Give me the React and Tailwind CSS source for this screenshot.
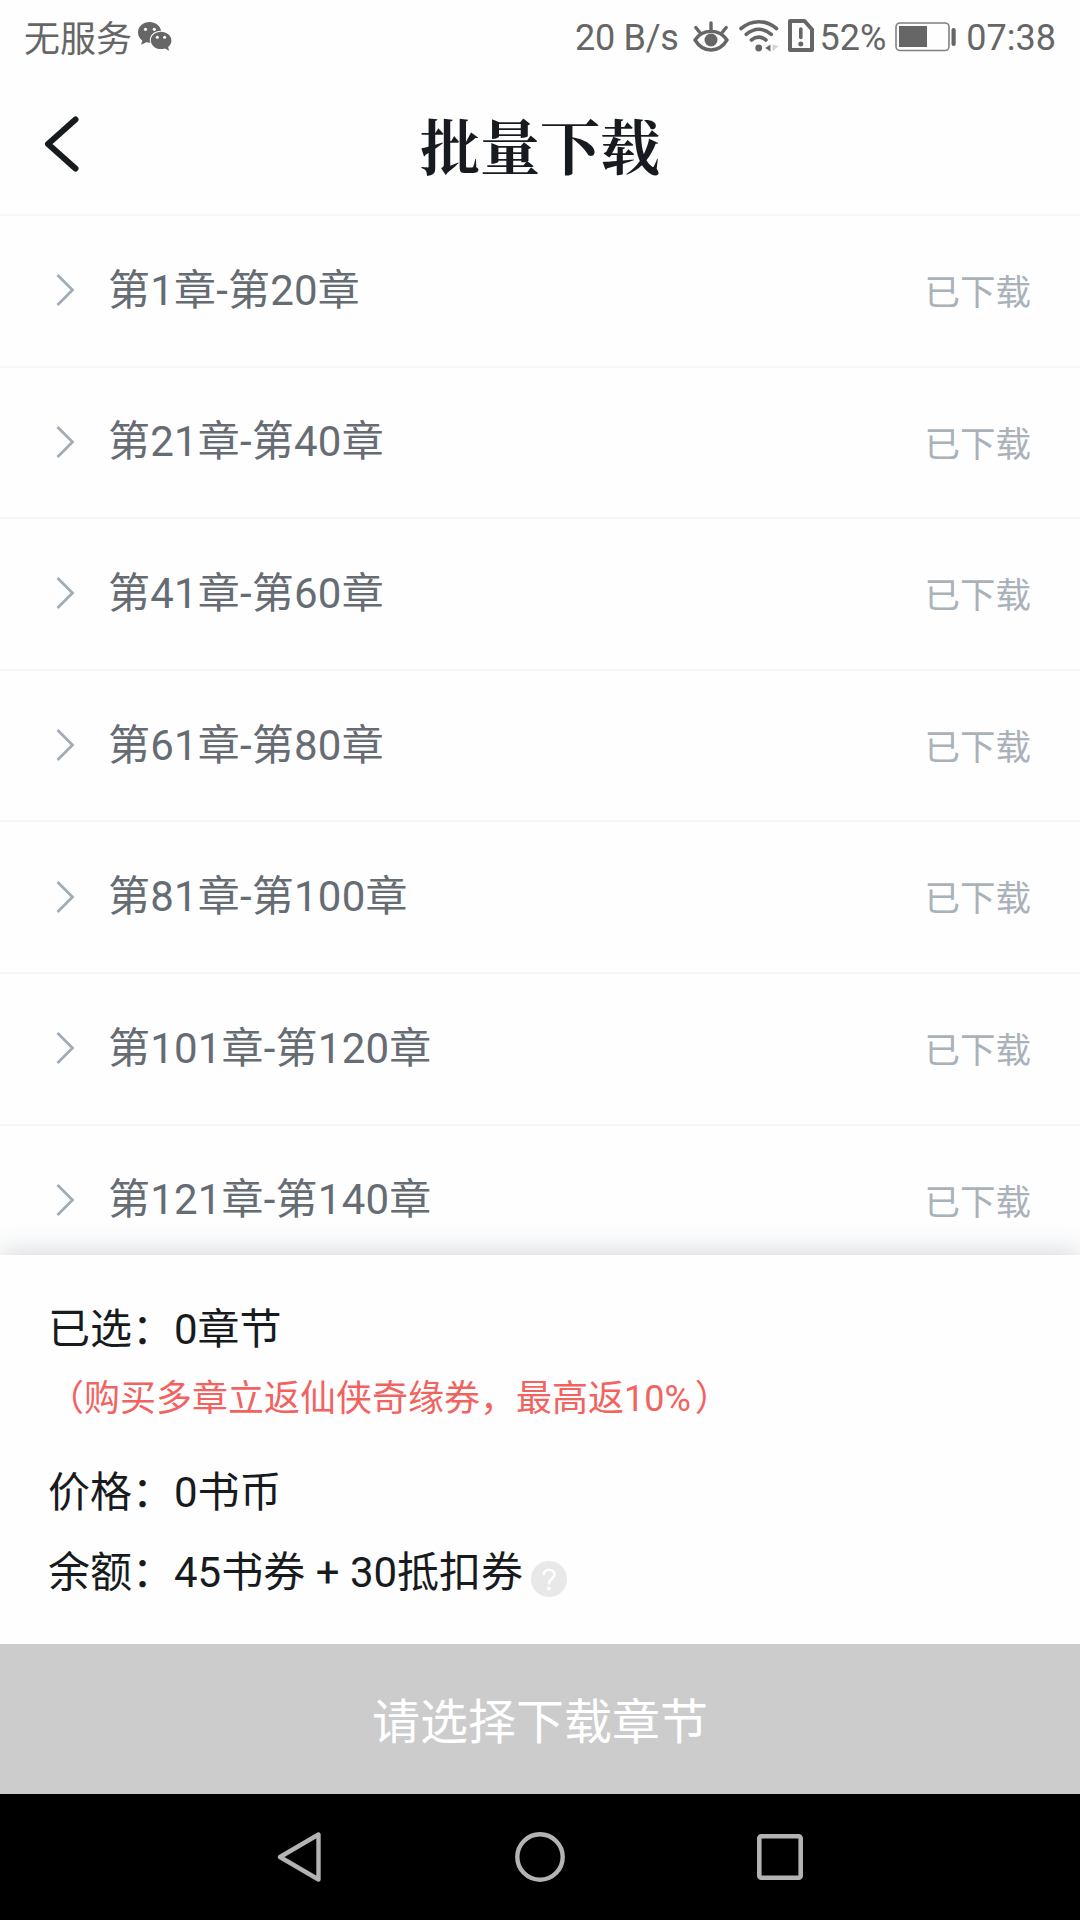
import React from 'react'

const chapters = [
  { id: 1, label: '第1章-第20章' },
  { id: 2, label: '第21章-第40章' },
  { id: 3, label: '第41章-第60章' },
  { id: 4, label: '第61章-第80章' },
  { id: 5, label: '第81章-第100章' },
  { id: 6, label: '第101章-第120章' },
  { id: 7, label: '第121章-第140章' },
]

function WechatIcon() {
  return (
    <svg className="w-[34px] h-[30px]" viewBox="0 0 34 30" fill="#666666">
      <path d="M11.6 0C5.2 0 0 4.6 0 10.4c0 3.3 1.7 6.200 4.300 8.100L3.200 22.800l5-2.500c1.300.35 2.600.5 4 .45A9.600 9.600 0 0 1 11.800 18c0-5.200 4.900-9.300 11-9.300h.3C22.200 3.700 17.400 0 11.600 0z" />
      <path d="M22.900 9.800c-5.600 0-10.100 3.800-10.100 8.600s4.500 8.600 10.100 8.600c1.400 0 2.700-.2 3.900-.6l4.300 2.400-1-3.900c2-1.600 3.300-3.900 3.300-6.500 0-4.800-4.800-8.600-10.500-8.600z" />
      <circle cx="7.500" cy="7.300" r="1.600" fill="#fff" />
      <circle cx="16.300" cy="7.300" r="1.600" fill="#fff" />
      <circle cx="19.300" cy="15.300" r="1.500" fill="#fff" />
      <circle cx="26.600" cy="15.300" r="1.500" fill="#fff" />
    </svg>
  )
}

function EyeIcon() {
  return (
    <svg className="w-9 h-8" viewBox="0 0 36 32" fill="none" stroke="#666666" strokeWidth="3.400" strokeLinecap="round">
      <path d="M2 19C6 13 11 10.400 18 10.400S30 13 34 19C30 25.500 25 29 18 29S6 25.500 2 19z" strokeLinejoin="round" />
      <path d="M18 2v8M2.800 6.500l4 5M33.200 6.500l-4 5" />
      <circle cx="18" cy="19" r="6.500" fill="#666666" stroke="none" />
    </svg>
  )
}

function WifiIcon() {
  return (
    <svg className="w-10 h-[34px]" viewBox="0 0 40 34" fill="none" stroke="#666666" strokeWidth="3.600" strokeLinecap="round">
      <path d="M2 9.500C13 .4 26.500.4 37.500 9.500" />
      <path d="M7.200 15.300C15.500 8.600 24 8.600 32.300 15.300" />
      <path d="M12.400 21C17.500 17 22 17 27 21" />
      <circle cx="19.700" cy="29" r="3.400" fill="#666666" stroke="none" />
      <path d="M31.500 25.500v7l-5.300-3.500z" fill="#666666" stroke="none" />
      <path d="M33.500 25.500v7l6-5.500z" fill="#d4d4d4" stroke="none" />
    </svg>
  )
}

function SimAlertIcon() {
  return (
    <svg className="w-[26px] h-[34px]" viewBox="0 0 26 34" fill="none" stroke="#666666" strokeWidth="4" strokeLinejoin="round" strokeLinecap="round">
      <path d="M2 2h14.500L24 10.500V31H2z" />
      <path d="M12.800 10v8.500" strokeWidth="3.600" />
      <circle cx="12.800" cy="25" r="2.500" fill="#666666" stroke="none" />
    </svg>
  )
}

function BatteryIcon() {
  return (
    <svg className="w-[62px] h-[30px]" viewBox="0 0 62 30" fill="none">
      <rect x="1" y="1" width="53" height="27.500" rx="4" stroke="#808080" strokeWidth="1.600" />
      <rect x="4" y="4" width="28" height="21" fill="#666666" />
      <rect x="56.500" y="6" width="4.200" height="18" rx="2" fill="#666666" />
    </svg>
  )
}

function StatusBar() {
  return (
    <div className="flex h-[75px] shrink-0 items-center justify-between pl-6 pr-6 text-[36px] leading-none text-[#666666]">
      <div className="flex items-center">
        <span className="pt-1">无服务</span>
        <span className="ml-1.5 -mt-0.5"><WechatIcon /></span>
      </div>
      <div className="flex items-center">
        <span className="tracking-[-0.3px]">20 B/s</span>
        <span className="ml-3.5 -mt-0.5"><EyeIcon /></span>
        <span className="ml-2.5 -mt-1"><WifiIcon /></span>
        <span className="ml-[9px] -mt-1"><SimAlertIcon /></span>
        <span className="ml-1.5">52%</span>
        <span className="ml-[9px] -mt-0.5"><BatteryIcon /></span>
        <span className="ml-[9px]">07:38</span>
      </div>
    </div>
  )
}

function Header() {
  return (
    <header className="grid h-[141px] shrink-0 grid-cols-[1fr_auto_1fr] items-center border-b-2 border-[#f5f7f7]">
      <button className="mb-0.5 ml-[43px] w-9">
        <svg className="h-14 w-9" viewBox="0 0 36 56" fill="none" stroke="#171b20" strokeWidth="6" strokeLinecap="round" strokeLinejoin="round">
          <path d="M32.500 3.500L5 28l27.500 24.500" />
        </svg>
      </button>
      <h1 className="pb-0.5 font-['Noto_Serif_CJK_SC','Noto_Sans_CJK_SC',serif] text-[60px] leading-none font-bold text-[#171b20]">批量下载</h1>
    </header>
  )
}

function ChapterRow({ label }) {
  return (
    <li className="flex h-[151.6px] shrink-0 items-center border-b-2 border-[#f5f6f7] pl-[55px] pr-[49px]">
      <svg className="mb-px h-8 w-5" viewBox="0 0 20 32" fill="none" stroke="#a3abb4" strokeWidth="2.800">
        <path d="M2.500 1l15 15-15 15" />
      </svg>
      <span className="ml-[33px] text-[42px] leading-none tracking-[0.2px] text-[#656c74]">{label}</span>
      <span className="ml-auto pt-1.5 text-[35.500px] leading-none text-[#a9b1b9]">已下载</span>
    </li>
  )
}

function Summary() {
  return (
    <section className="relative h-[389px] shrink-0 bg-[#fefefe] px-12 pt-[54px] text-[42px] text-[#171b20] shadow-[0_0_28px_rgba(90,105,125,0.32)]">
      <p className="leading-[42px]">已选：0章节</p>
      <p className="mt-[30px] text-[36px] leading-9 text-[#f2635f]">（购买多章立返仙侠奇缘券，最高返10%<span className="ml-1">）</span></p>
      <p className="mt-[55px] leading-[42px]">价格：0书币</p>
      <p className="mt-[35px] flex items-center leading-[42px]">
        余额：45书券 + 30抵扣券
        <svg className="ml-2 mt-3 size-9" viewBox="0 0 36 36" fill="none">
          <circle cx="18" cy="18" r="18" fill="#e8e8e8" />
          <path d="M12.500 14c0-3.300 2.300-5.300 5.500-5.300s5.500 2 5.500 4.800c0 3.700-5.500 4.700-5.500 8.700v1.300" stroke="#fff" strokeWidth="2.600" />
          <circle cx="18" cy="27.500" r="2" fill="#fff" />
        </svg>
      </p>
    </section>
  )
}

function NavBar() {
  return (
    <nav className="flex h-[126px] shrink-0 items-center bg-black pl-[277px] text-[#b3b3b3]">
      <svg className="h-[50px] w-[45px]" viewBox="0 0 45 50" fill="none" stroke="currentColor" strokeWidth="4.400" strokeLinejoin="round">
        <path d="M41.500 2.500v45L3 25z" />
      </svg>
      <svg className="ml-[193px] size-[50px]" viewBox="0 0 50 50" fill="none" stroke="currentColor" strokeWidth="4.400">
        <circle cx="25" cy="25" r="22.700" />
      </svg>
      <svg className="ml-48 size-[46px]" viewBox="0 0 46 46" fill="none" stroke="currentColor" strokeWidth="4.600">
        <rect x="2.300" y="2.300" width="41.400" height="41.400" rx="2" />
      </svg>
    </nav>
  )
}

export default function App() {
  return (
    <div className="flex h-[1920px] w-[1080px] flex-col overflow-hidden bg-[#fefefe] font-[Roboto,'Noto_Sans_CJK_SC',sans-serif]">
      <StatusBar />
      <Header />
      {/* Chapter groups, the last one runs under the summary panel */}
      <ul className="flex h-[1039px] shrink-0 flex-col overflow-hidden">
        {chapters.map((chapter) => (
          <ChapterRow key={chapter.id} label={chapter.label} />
        ))}
      </ul>
      <Summary />
      <button className="relative h-[150px] shrink-0 bg-[#cccccc] pt-2 text-[48px] text-white">请选择下载章节</button>
      <NavBar />
    </div>
  )
}
